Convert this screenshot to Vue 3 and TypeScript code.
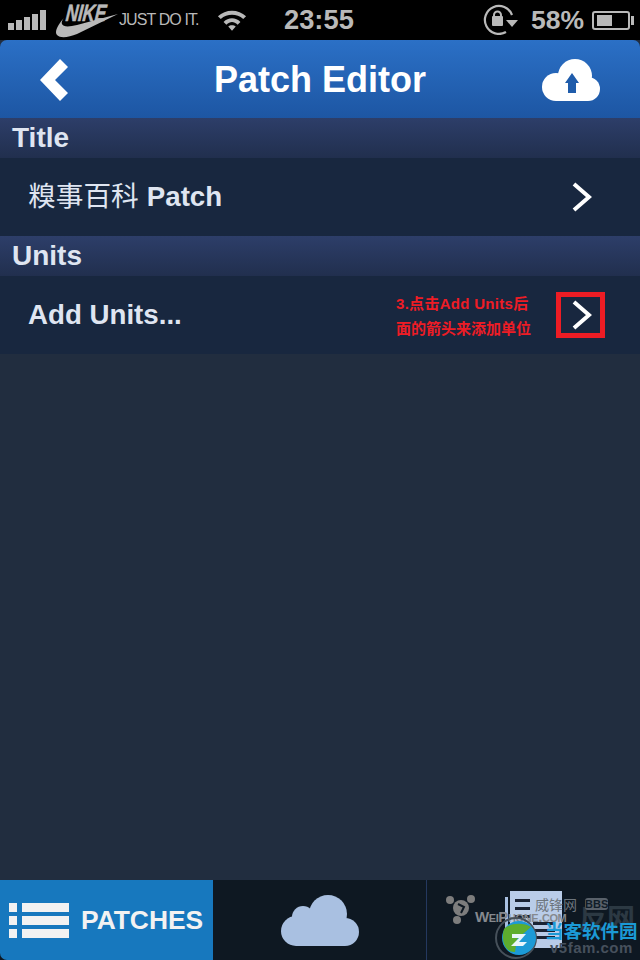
<script setup lang="ts">
const signalBars: number[] = [7, 10, 13, 16, 20]

interface Row {
  heading: string
  cjk: string
  label: string
  marked: boolean
}

const rows: Row[] = [
  { heading: 'Title', cjk: '糗事百科', label: 'Patch', marked: false },
  { heading: 'Units', cjk: '', label: 'Add Units...', marked: true },
]
</script>

<template>
  <div class="phone">
    <div class="status">
      <div class="signal">
        <i v-for="h in signalBars" :key="h" :style="{ height: h + 'px' }"></i>
      </div>
      <div class="nike">
        <svg class="swoosh" width="66" height="40" viewBox="0 0 66 40">
          <path d="M10 17 C3 24 -1 32 2 35 C6 39 14 37 22 34 L63 14 L22 25 C14 27 8 27 7 24 C6 22 8 19 10 17 Z" fill="#b9b9b9" />
        </svg>
        <span class="nike-word">NIKE</span>
        <span class="just">JUST DO IT.</span>
      </div>
      <svg class="wifi" width="30" height="24" viewBox="0 0 32 24">
        <path d="M1 8 C9 0 23 0 31 8 L28 11 C21 5 11 5 4 11 Z M7 14 C12 9 20 9 25 14 L22 17 C18 13 14 13 10 17 Z M12 19 C14 17 18 17 20 19 L16 23.500 Z" fill="#b9b9b9" />
      </svg>
      <span class="clock">23:55</span>
      <svg class="lock" width="36" height="32" viewBox="0 0 36 32">
        <path d="M23 29 A14 14 0 1 1 29 12" fill="none" stroke="#b9b9b9" stroke-width="2.200" />
        <path d="M23 17 H35 L29 24 Z" fill="#b9b9b9" />
        <rect x="9" y="13" width="11" height="10" rx="1" fill="#b9b9b9" />
        <path d="M11 13 V12 A3.500 3.500 0 0 1 18 12 V13" fill="none" stroke="#b9b9b9" stroke-width="2" />
      </svg>
      <span class="percent">58%</span>
      <div class="battery"><div class="charge"></div></div>
      <div class="battery-cap"></div>
    </div>

    <div class="navbar">
      <svg class="back" width="28" height="42" viewBox="0 0 28 42">
        <path d="M20 0 L28 8 L15 21 L28 34 L20 42 L0 21 Z" fill="#fff" />
      </svg>
      <h1>Patch Editor</h1>
      <svg class="upload" width="58" height="42" viewBox="0 0 58 42">
        <g fill="#fff">
          <circle cx="14" cy="28" r="14" />
          <circle cx="33" cy="17" r="17" />
          <circle cx="46" cy="30" r="12" />
          <rect x="14" y="20" width="32" height="22" />
        </g>
        <path d="M30 14 L37 24 H34 V34 H26 V24 H23 Z" fill="#1f5cab" />
      </svg>
    </div>

    <template v-for="row in rows" :key="row.heading">
      <div class="section">{{ row.heading }}</div>
      <div class="row">
        <div class="label">
          <span v-if="row.cjk" class="label-cjk">{{ row.cjk }}</span>{{ row.label }}
        </div>
        <div v-if="row.marked" class="note">
          <span class="note-first">3.点击Add Units后</span>
          <span>面的箭头来添加单位</span>
        </div>
        <div class="chevron-box" :class="{ marked: row.marked }">
          <svg width="20" height="30" viewBox="0 0 20 30">
            <path d="M2 2 L17 15 L2 28" fill="none" stroke="#fff" stroke-width="4" />
          </svg>
        </div>
      </div>
    </template>

    <div class="spacer"></div>

    <div class="tabs">
      <div class="tab-patches">
        <svg width="60" height="35" viewBox="0 0 60 35" fill="#f2f2f2">
          <rect x="0" y="0" width="8" height="9" />
          <rect x="13" y="0" width="47" height="9" />
          <rect x="0" y="13" width="8" height="9" />
          <rect x="13" y="13" width="47" height="9" />
          <rect x="0" y="26" width="8" height="9" />
          <rect x="13" y="26" width="47" height="9" />
        </svg>
        <span>PATCHES</span>
      </div>
      <div class="tab-cloud">
        <svg width="78" height="51" viewBox="0 0 78 51" fill="#a9c0e1">
          <circle cx="15" cy="36" r="15" />
          <circle cx="22" cy="22" r="11" />
          <circle cx="47" cy="19" r="19" />
          <circle cx="64" cy="37" r="14" />
          <rect x="15" y="25" width="49" height="26" />
        </svg>
      </div>
      <div class="tab-news">
        <svg class="doc" width="57" height="57" viewBox="0 0 57 57">
          <rect x="0" y="6" width="3" height="44" fill="#a9c0e1" />
          <rect x="5" y="0" width="52" height="57" fill="#b9cce8" />
          <rect x="10" y="8" width="15" height="3" fill="#1a2333" />
          <rect x="10" y="16" width="15" height="3" fill="#1a2333" />
          <rect x="10" y="24" width="15" height="3" fill="#1a2333" />
          <rect x="28" y="31" width="22" height="3" fill="#1a2333" />
          <rect x="28" y="38" width="22" height="3" fill="#1a2333" />
          <rect x="28" y="45" width="22" height="3" fill="#1a2333" />
        </svg>
        <svg class="wf-mark" width="30" height="29" viewBox="0 0 30 29">
          <g fill="#7d7d7d">
            <circle cx="4" cy="5" r="4" />
            <circle cx="25" cy="4" r="4" />
            <circle cx="11" cy="25" r="4" />
            <circle cx="15" cy="13" r="8" />
          </g>
          <path d="M12 9 L18 12 L15 18" fill="none" stroke="#0e1822" stroke-width="2" />
        </svg>
        <span class="wf-ghost">反网</span>
        <span class="wf-cn">威锋网</span>
        <span class="wf-bbs">BBS</span>
        <span class="wf-en">WeiPhone.com</span>
        <svg class="dk-logo" width="46" height="42" viewBox="0 0 46 42">
          <circle cx="21" cy="21" r="20" fill="none" stroke="#46505a" stroke-width="2" />
          <circle cx="24" cy="21" r="17" fill="#1c9ad6" />
          <path d="M9 12 C15 6 28 5 36 10 L22 22 L20 35 C12 36 5 26 9 12 Z" fill="#5dad2e" />
          <path d="M17 17 H31 L24 25 H32 L28 29 H16 L24 21 H17 Z" fill="#e8f5fb" />
        </svg>
        <span class="dk-name">当客软件园</span>
        <span class="dk-url">v5fam.com</span>
      </div>
    </div>
  </div>
</template>

<style scoped>
.phone {
  width: 640px;
  height: 960px;
  display: flex;
  flex-direction: column;
  background: #212d3f;
  font-family: "Liberation Sans", "Noto Sans CJK SC", sans-serif;
  overflow: hidden;
}

/* status bar */
.status {
  height: 40px;
  flex: none;
  background: #000;
  color: #b9b9b9;
  display: flex;
  align-items: center;
  padding-left: 8px;
  box-sizing: border-box;
}
.signal {
  display: flex;
  align-items: flex-end;
  gap: 2px;
  width: 38px;
  height: 20px;
  flex: none;
}
.signal i {
  display: block;
  width: 6px;
  background: #b9b9b9;
}
.nike {
  position: relative;
  width: 163px;
  height: 40px;
  margin-left: 8px;
  flex: none;
}
.swoosh {
  position: absolute;
  left: 1px;
  top: 0;
}
.nike-word {
  position: absolute;
  left: 12px;
  top: 1px;
  font-size: 23.500px;
  font-weight: 700;
  font-style: italic;
  line-height: 24px;
  -webkit-text-stroke: 0.6px #b9b9b9;
  transform: scaleX(0.72) skewX(-8deg);
  transform-origin: left center;
}
.just {
  position: absolute;
  left: 65px;
  top: 10px;
  font-size: 16px;
  line-height: 20px;
  letter-spacing: -0.9px;
  white-space: nowrap;
}
.wifi {
  margin-top: -1px;
  flex: none;
}
.clock {
  margin-left: 37px;
  width: 199px;
  flex: none;
  font-size: 27.300px;
  font-weight: 700;
  line-height: 40px;
}
.lock {
  flex: none;
  margin-top: -2px;
}
.percent {
  margin-left: 12px;
  font-size: 26.500px;
  font-weight: 700;
  line-height: 40px;
  width: 61px;
  flex: none;
}
.battery {
  width: 38px;
  height: 19px;
  border: 2px solid #b9b9b9;
  border-radius: 3px;
  padding: 2px 3px;
  box-sizing: border-box;
  flex: none;
}
.charge {
  width: 15px;
  height: 11px;
  background: #b9b9b9;
}
.battery-cap {
  width: 3px;
  height: 9px;
  background: #b9b9b9;
  flex: none;
  margin-left: 1px;
}

/* nav */
.navbar {
  height: 78px;
  flex: none;
  background: linear-gradient(#2b70c6, #1d56a3);
  border-radius: 7px 7px 0 0;
  display: grid;
  grid-template-columns: 1fr auto 1fr;
  align-items: center;
  padding: 0 40px;
  box-sizing: border-box;
}
.navbar h1 {
  margin: 2px 0 0;
  font-size: 36px;
  font-weight: 700;
  color: #fff;
  line-height: 76px;
}
.back {
  margin-top: 2px;
}
.upload {
  margin-top: 2px;
  justify-self: end;
}

/* rows */
.section {
  height: 40px;
  flex: none;
  background: linear-gradient(#2d3e69, #212f4e);
  color: #dfe5f1;
  font-size: 28px;
  font-weight: 700;
  line-height: 39px;
  padding-left: 12px;
  box-sizing: border-box;
}
.row {
  height: 78px;
  flex: none;
  background: #18273f;
  display: flex;
  align-items: center;
  padding-left: 28px;
  padding-right: 35px;
  box-sizing: border-box;
  position: relative;
}
.label {
  color: #dfe5f1;
  font-size: 27.700px;
  font-weight: 700;
  line-height: 36px;
  flex: 1;
  white-space: nowrap;
}
.label-cjk {
  font-weight: 400;
  margin-right: 8px;
}
.note {
  display: flex;
  flex-direction: column;
  gap: 2px;
  color: #ee1c25;
  font-size: 15px;
  font-weight: 700;
  line-height: 23px;
  position: absolute;
  left: 396px;
  top: 16px;
}
.note-first {
  letter-spacing: 0.3px;
}
.chevron-box {
  width: 49px;
  height: 46px;
  padding-left: 2px;
  display: flex;
  align-items: center;
  justify-content: center;
  box-sizing: border-box;
}
.chevron-box.marked {
  border: 5px solid #ed1c24;
}
.spacer {
  flex: 1;
}

/* bottom tabs */
.tabs {
  height: 80px;
  flex: none;
  background: #0e1822;
  display: flex;
}
.tab-patches {
  width: 213px;
  flex: none;
  background: #1778be;
  display: flex;
  align-items: center;
  gap: 12px;
  padding-left: 9px;
  box-sizing: border-box;
  border-bottom-left-radius: 7px;
}
.tab-patches span {
  color: #f2f2f2;
  font-size: 26.400px;
  font-weight: 700;
}
.tab-cloud {
  width: 213px;
  flex: none;
  display: flex;
  align-items: center;
  justify-content: center;
}
.tab-news {
  flex: 1;
  position: relative;
  border-left: 1px solid #24385f;
}
.doc {
  position: absolute;
  left: 78px;
  top: 11px;
}
.wf-mark {
  position: absolute;
  left: 19px;
  top: 15px;
}
.wf-ghost {
  position: absolute;
  left: 152px;
  top: 24px;
  font-size: 28px;
  line-height: 32px;
  font-weight: 700;
  color: #2c3943;
  white-space: nowrap;
}
.wf-cn {
  position: absolute;
  left: 108px;
  top: 16px;
  font-size: 14px;
  line-height: 18px;
  color: #6d757d;
}
.wf-bbs {
  position: absolute;
  left: 158px;
  top: 18px;
  width: 23px;
  height: 12px;
  border-radius: 3px;
  background: #59616a;
  color: #101c28;
  font-size: 11px;
  font-weight: 700;
  line-height: 12px;
  text-align: center;
}
.wf-en {
  position: absolute;
  left: 48px;
  top: 30px;
  font-size: 15px;
  line-height: 14px;
  font-weight: 700;
  font-variant: small-caps;
  letter-spacing: -0.4px;
  color: #85898e;
  white-space: nowrap;
}
.dk-logo {
  position: absolute;
  left: 68px;
  top: 37px;
}
.dk-name {
  position: absolute;
  left: 118px;
  top: 41px;
  font-size: 18.500px;
  line-height: 22px;
  font-weight: 700;
  color: #1b9ad6;
  white-space: nowrap;
}
.dk-url {
  position: absolute;
  left: 123px;
  top: 61px;
  font-size: 15px;
  line-height: 13px;
  letter-spacing: 0.5px;
  font-weight: 700;
  color: #46505c;
  white-space: nowrap;
}
</style>
